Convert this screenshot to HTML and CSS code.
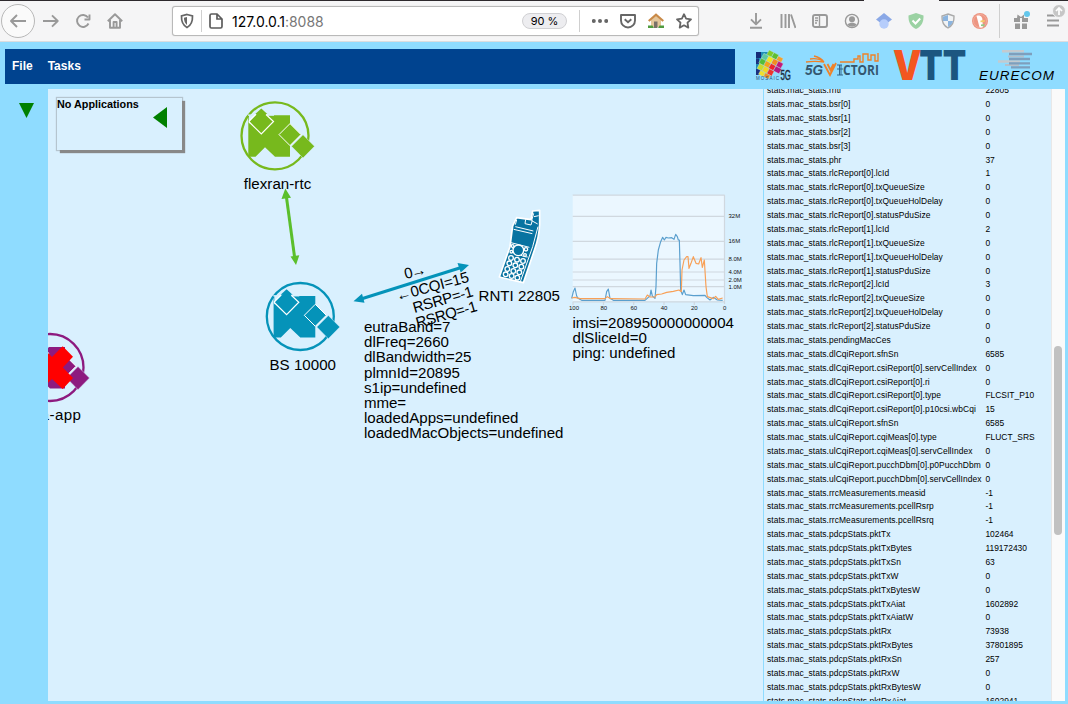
FILE: index.html
```html
<!DOCTYPE html>
<html lang="en">
<head>
<meta charset="utf-8">
<title>127.0.0.1:8088</title>
<link rel="stylesheet" href="styles.css">
</head>
<body>
<div class="tabstrip"><span class="tab-active"></span></div>
<header class="browser">
  <div class="back"><svg width="20" height="20" viewBox="0 0 20 20"><path d="M18 10H3M9 4L3 10l6 6" class="ln"/></svg></div>
  <div class="nav">
    <svg width="16" height="16" viewBox="0 0 16 16"><path d="M0 8h14.500M9 2.300L14.700 8 9 13.700" class="ln"/></svg>
    <svg width="16" height="16" viewBox="0 0 16 16"><path d="M13 4.500A6 6 0 1 0 13.500 10.500M14.500 1.500V6.500H9.500" class="ln"/></svg>
    <svg width="16" height="16" viewBox="0 0 16 16"><path d="M.8 8.200L8 1.200l7.200 7M3 7v7.700h10V7" class="ln"/><path d="M6.600 14V9h3v5" class="ln"/></svg>
  </div>
  <div class="urlbar">
    <svg class="shield" width="14" height="16" viewBox="0 0 14 16"><path d="M7 1.500L12.500 3c.2 5-.9 9-5.500 11.500C2.400 12 1.300 8 1.500 3z" fill="none" stroke="#666" stroke-width="1.700"/><path d="M7 4v8C4.800 10 4 8 4 4.700z" fill="#666"/></svg>
    <i class="sep"></i>
    <svg class="page" width="14" height="16" viewBox="0 0 14 16"><path d="M2.500 1H8l5 5v7.500a1.500 1.500 0 0 1-1.500 1.500h-9A1.500 1.500 0 0 1 1 13.500v-11A1.500 1.500 0 0 1 2.500 1zM8 1.500V6h4.500" fill="none" stroke="#5c5c5c" stroke-width="1.700"/></svg>
    <span class="url">127.0.0.1<span class="port">:8088</span></span>
    <span class="zoom">90 %</span>
    <i class="sep"></i>
    <div class="actions">
      <svg width="16" height="16" viewBox="0 0 16 16" fill="#666"><circle cx="1.800" cy="8" r="2"/><circle cx="8" cy="8" r="2"/><circle cx="14.200" cy="8" r="2"/></svg>
      <svg width="16" height="16" viewBox="0 0 16 16" fill="none" stroke="#666" stroke-width="1.900"><path d="M1 2h14V7.500A7 7 0 0 1 1 7.500z" stroke-linejoin="round"/><path d="M4.700 6.300L8 9.300l3.300-3"/></svg>
      <svg width="16" height="16" viewBox="0 0 16 16"><path d="M3 7l5-5 5 5v7H3z" fill="#e4c69b"/><path d="M.7 8L8 1.700 15.300 8" fill="none" stroke="#c98a48" stroke-width="2.200"/><path d="M6 8.500h3.500V15H6z" fill="#7a7069"/><path d="M0 12.500h4.500L6 15H0zM11.500 12.500H16V15h-6z" fill="#4f9b3f"/></svg>
      <svg width="16" height="16" viewBox="0 0 16 16"><path d="M8 1.200l2.100 4.400 4.900.7-3.500 3.400.8 4.900L8 12.300l-4.300 2.300.8-4.900L1 6.300l4.900-.7z" fill="none" stroke="#666" stroke-width="1.800" stroke-linejoin="round"/></svg>
    </div>
  </div>
  <div class="tools">
    <svg width="16" height="16" viewBox="0 0 16 16"><path d="M8 0v11M3 6.300l5 5 5-5M2 14.800h12" class="ln"/></svg>
    <svg width="16" height="16" viewBox="0 0 16 16"><path d="M1.500 1v14M5.500 1v14M9 1v14M11 1.500L15.500 15" class="ln"/></svg>
    <svg width="16" height="16" viewBox="0 0 16 16"><rect x="1" y="2" width="14" height="12" rx="2" class="ln"/><path d="M7.500 2v12M3 5h3M3 7.500h3M3 10h2" class="ln thin"/></svg>
    <svg width="16" height="16" viewBox="0 0 16 16"><circle cx="8" cy="8" r="6.600" class="ln thin"/><circle cx="8" cy="6.300" r="3" fill="#999"/><path d="M3.400 11.500C5.500 9 10.500 9 12.600 11.500c-2 3-7 3-9.200 0z" fill="#999"/></svg>
    <svg width="16" height="16" viewBox="0 0 16 16"><path d="M8 0l8 6.500-4 3H4l-4-3z" fill="#8aa8e6"/><circle cx="8" cy="11" r="4.700" fill="#b6cdfb"/></svg>
    <svg width="16" height="16" viewBox="0 0 16 16"><path d="M8 0l7.500 2.500C15.800 9 13.500 13.500 8 16 2.500 13.500.2 9 .5 2.500z" fill="#9bd2a3"/><path d="M4.500 7.500l3 3 4.700-5" fill="none" stroke="#fff" stroke-width="2"/></svg>
    <svg width="16" height="16" viewBox="0 0 16 16"><path d="M8 1l6 2c.3 5.700-1.300 9.500-6 12C3.300 12.500 1.700 8.700 2 3z" fill="#f1f3f5" stroke="#aaa" stroke-width="1.400"/><path d="M8 2v6H3L2.800 3.700zM8 8h5c-.8 3-2 4.500-5 6z" fill="#8bb4df"/></svg>
    <svg width="16" height="16" viewBox="0 0 16 16"><circle cx="8" cy="8" r="8" fill="#ed9582"/><circle cx="8" cy="8" r="6.500" fill="none" stroke="#f3b8aa" stroke-width=".6"/><path d="M4.500 3C8 1.500 11 4 10.300 7.500L11 14c-1.500.7-2.500.7-3.500.3z" fill="#fff"/><path d="M8.500 7.500l4.500-.6-.5 2-4 .4z" fill="#f3cb67"/><path d="M9 11.500l3.500-.5v2.500L9 13z" fill="#91c985"/></svg>
  </div>
  <i class="sep tall"></i>
  <div class="tools last">
    <svg width="20" height="20" viewBox="0 0 20 20"><path d="M3 8h6v4H3zM11 8h6v4h-6zM4 13.500h5V19H4zM11 13.500h5V19h-5zM6.500 4.500L10 7l3-2.500V8H6z" fill="#999"/><circle cx="16" cy="4" r="3" fill="#63c7ec"/></svg>
    <svg width="22" height="24" viewBox="0 0 22 24"><path d="M2 11.500h12M2 16.500h12M2 21.500h12" class="ln"/><circle cx="14" cy="7" r="6.500" fill="#c6c6c6" stroke="#f5f5f6"/><path d="M14 11V4.500M11 7l3-3 3 3" fill="none" stroke="#fff" stroke-width="1.700"/></svg>
  </div>
</header>

<div class="app">
  <div class="topbar">
    <nav class="menu"><span>File</span><span>Tasks</span></nav>
    <div class="logos">
      <svg width="37" height="32" viewBox="0 0 37 32">
        <path d="M1 3h14v23H1z" fill="#1f8fb5"/><path d="M1 3h5v6H1z" fill="#152b77"/><path d="M1 9.500h3V15H1zM1 20l6 1 3 5H1z" fill="#1a317f"/>
        <g transform="translate(11.500 -.5) rotate(28)" stroke="#b9e2e6" stroke-width=".4">
          <path d="M3 0h5.500v5.500H3z" fill="#7ecb29"/><path d="M8.500 0H14v5.500H8.500z" fill="#5fbe2f"/><path d="M14 1h5.500v4.500H14z" fill="#f4a02a"/>
          <path d="M0 5.500h5.500V11H0z" fill="#5cc8a0"/><path d="M5.500 5.500H11V11H5.500z" fill="#f3e61d"/><path d="M11 5.500h5.500V11H11z" fill="#f28c21"/><path d="M16.500 5.500H22V11h-5.500z" fill="#c2187c"/>
          <path d="M0 11h5.500v5.500H0z" fill="#54be38"/><path d="M5.500 11H11v5.500H5.500z" fill="#f3a11c"/><path d="M11 11h5.500v5.500H11z" fill="#ee242d"/><path d="M16.500 11H23v5.500h-6.500z" fill="#b31983"/>
          <path d="M1 16.500h5.500V22H1z" fill="#c9dc2a"/><path d="M6.500 16.500H12V22H6.500z" fill="#f5d51d"/><path d="M12 16.500h5.500V22H12z" fill="#ee342d"/>
          <path d="M5 22h5.500v4.500H5z" fill="#f0e02d"/><path d="M10.500 22H16v4h-5.500z" fill="#f28c21"/>
        </g>
        <text x="1" y="31" class="mosaic" textLength="23">MOSAIC</text>
        <text x="25.500" y="30.500" class="mosaic5g" textLength="10.500" lengthAdjust="spacingAndGlyphs">5G</text>
      </svg>
      <svg width="75" height="28" viewBox="0 0 75 28">
        <text x="0" y="23" class="v5g" textLength="18" lengthAdjust="spacingAndGlyphs">5G</text>
        <path d="M5 7c6-1 10 0 14 3-7-1-11-1-18 0M9 4c4 1 8 3 10 6" fill="none" stroke="#ef8228" stroke-width="1.300"/>
        <path d="M19 12l6 11 6-12M22.500 12l3 6 3-6" fill="none" stroke="#ef8228" stroke-width="1.800"/>
        <path d="M34.500 13v10M32 13h5M36 13v10M32 17h6M32 23h6" stroke="#34678c" fill="none"/>
        <text x="38" y="23" class="victori" textLength="36" lengthAdjust="spacingAndGlyphs">CTORI</text>
        <path d="M35 10h14V7h4V4h2v6h3V2h5v6h3V3h4v6h3V1" fill="none" stroke="#ef8228" stroke-width="1.400"/>
      </svg>
      <svg width="74" height="32" viewBox="0 0 74 32">
        <text x="0" y="30.500" class="vtt" textLength="28.500" lengthAdjust="spacingAndGlyphs" fill="#f3561f">V</text>
        <text x="26.300" y="30.500" class="vtt" textLength="47" lengthAdjust="spacingAndGlyphs" fill="#1c5680">TT</text>
      </svg>
      <svg width="78" height="32" viewBox="0 0 78 32">
        <path d="M24 2.300h22M20 12.500h22" stroke="#c4cacf" stroke-width="2.500"/><path d="M30 7.500h16M27 16h14" stroke="#b5c0cb" stroke-width="2"/>
        <path d="M31 5h23M31 10h21M31 14.300h21M33 18.300h19" stroke="#7e9fbd" stroke-width="2.300"/>
        <text x="1" y="30.500" class="eurecom" textLength="75">EURECOM</text>
      </svg>
    </div>
  </div>

  <div class="workspace">
    <aside class="rail"><i class="down"></i></aside>
    <main class="canvas">
      <svg class="graph" viewBox="48 89 715 612" width="715" height="612">
        <defs>
          <g id="node">
            <circle r="33.500" fill="none" stroke="currentColor" stroke-width="2.300"/>
            <path d="M-26.700-20.500H15V21H0l-10-9.500L-19.500 21h-7.200z" fill="currentColor"/>
            <path d="M-27-20.700h26" stroke="#d9f0fe" stroke-width="1.300"/>
            <path d="M-13.700-27.300l6 5.500h-12z" fill="currentColor"/>
            <path d="M-26-20.500h8L-26-12z" fill="#d9f0fe"/>
            <path d="M-13.700-26.300l12.300 12-12 12-12.300-12z" fill="currentColor"/>
            <path d="M-26.300-14.300l12.600 12.500 12.200-12.500-7.500-7M-26.300-14.300l7-7" fill="none" stroke="#fff" stroke-width="1.200"/>
            <path d="M15-12.200L26-1.200 15 9.800 4-1.200z" fill="currentColor" stroke="#fff"/>
            <path d="M28-1L39.500 10.500 28 22.200 16.500 10.500z" fill="currentColor" stroke="#d9f0fe" stroke-width=".5"/>
          </g>
        </defs>
        <use href="#node" x="275" y="135.800" color="#77b91d"/>
        <use href="#node" x="300.300" y="316.500" color="#0593b9"/>
        <use href="#node" x="50" y="367.500" color="#8d1a7f"/>
        <path d="M41.300 346.300L52 357l10.700-10.700L73 356.700l-10.200 10.800L73 378l-10.300 11L52 379l-10.700 10L31 378l10.500-10.500L31 356.700z" fill="#f00"/>

        <g stroke="#5bbf2c" fill="#5bbf2c"><path d="M286.300 196L294.700 258" stroke-width="3"/><path d="M285.300 188.500l5.700 9.200-9.500 1.300zM296 265l3.300-9.700-8.800 1.200z" stroke="none"/></g>
        <g stroke="#0593b9" fill="#0593b9"><path d="M361 299L462 267.300" stroke-width="3"/><path d="M353.500 301.300l8.500-7.500 2.500 9zM469 265l-11.500-2 3.200 9.500z" stroke="none"/></g>

        <g class="label">
          <text x="243.700" y="189" textLength="67.500">flexran-rtc</text>
          <text x="269.500" y="370" textLength="66.500">BS 10000</text>
          <text x="14" y="420" textLength="67">ueda-app</text>
          <text x="478.500" y="301" textLength="81.500">RNTI 22805</text>
          <g transform="translate(405.500 279) rotate(-13)"><text textLength="22">0→</text></g>
          <g transform="translate(397.500 301) rotate(-15)"><text textLength="75">←0CQI=15</text></g>
          <g transform="translate(414.500 313) rotate(-16)"><text textLength="62">RSRP=-1</text></g>
          <g transform="translate(417.500 328) rotate(-16)"><text textLength="63">RSRQ=-1</text></g>
          <text x="364" y="332" textLength="86.500">eutraBand=7</text>
          <text x="364" y="347" textLength="85">dlFreq=2660</text>
          <text x="364" y="362" textLength="107.500">dlBandwidth=25</text>
          <text x="364" y="378" textLength="96">plmnId=20895</text>
          <text x="364" y="393" textLength="102.500">s1ip=undefined</text>
          <text x="364" y="408" textLength="42">mme=</text>
          <text x="364" y="423" textLength="154.500">loadedApps=undefined</text>
          <text x="364" y="438" textLength="199.500">loadedMacObjects=undefined</text>
          <text x="572.500" y="328" textLength="161.500">imsi=208950000000004</text>
          <text x="572.500" y="343" textLength="74.500">dlSliceId=0</text>
          <text x="572.500" y="358" textLength="103">ping: undefined</text>
        </g>

        <g transform="translate(480 190) scale(.33333)">
          <path d="M110 83l43 6 5-26 21-2v42c-1 25-6 50-15 75l-34 100-72-17 32-91 8-62z" fill="#0873a1" stroke="#fff" stroke-width="5" stroke-linejoin="round"/>
          <path d="M106 110l54 13M101 118l56 13M93 158l55 14M93 163c5 20 30 38 50 38" fill="none" stroke="#fff" stroke-width="3"/>
          <path d="M137 88l-2 13 18 4 4-14M161 70l-6 22 18 10M174 110l-16 60-37 105M162 80l14-3M110 90l-4 14" fill="none" stroke="#fff" stroke-width="3"/>
          <circle cx="115" cy="181" r="16" fill="#0873a1" stroke="#fff" stroke-width="4"/>
          <g fill="#0873a1" stroke="#fff" stroke-width="4">
            <circle cx="98" cy="168" r="4"/><circle cx="138" cy="178" r="5"/><circle cx="94" cy="185" r="4"/><circle cx="135" cy="195" r="4"/>
            <circle cx="93" cy="204" r="7"/><circle cx="111" cy="209" r="7"/><circle cx="129" cy="213" r="7"/>
            <circle cx="88" cy="220" r="7"/><circle cx="106" cy="226" r="7"/><circle cx="124" cy="230" r="7"/>
            <circle cx="82" cy="237" r="7"/><circle cx="100" cy="243" r="7"/><circle cx="118" cy="247" r="7"/>
            <circle cx="77" cy="253" r="7"/><circle cx="95" cy="258" r="7"/><circle cx="112" cy="263" r="7"/>
          </g>
        </g>

        <rect x="572.700" y="195" width="152" height="106.500" fill="#ebf7ff"/>
        <path d="M572.700 195.200h152M572.700 216.300h152M572.700 241.300h152M572.700 259.200h152M572.700 272h152M572.700 280h152M572.700 286.700h152M572.700 301.800h152M724.500 195v109M573 302v3M603.500 302v3M633.700 302v3M664 302v3M694.300 302v3" stroke="#d0d8df" stroke-width="1.200" fill="none"/>
        <g transform="translate(480 190) scale(.33333)" fill="none" stroke-width="3.500" stroke-linejoin="round">
          <polyline stroke="#5a9fce" points="275,325 280,305 285,294 290,318 294,325 305,331 375,331 380,305 385,297 390,325 400,331 495,331 505,322 510,318 513,300 517,318 525,325 528,290 530,220 535,180 542,155 548,142 553,150 558,142 565,144 575,143 582,148 587,133 592,140 595,150 598,150 600,220 602,300 607,314 612,300 617,314 640,317 675,316 680,322 690,330 700,322 712,330 728,331"/>
          <polyline stroke="#f8a057" points="275,324 285,322 300,326 375,326 382,320 392,326 495,327 502,315 510,321 525,321 530,314 545,312 560,307 580,304 597,300 604,305 606,240 612,210 620,200 624,200 627,235 633,220 640,200 648,220 656,222 663,203 667,232 673,210 678,290 682,320 700,326 707,319 715,328 728,324"/>
        </g>
        <g class="axis">
          <text x="728.500" y="217.800">32M</text><text x="728.500" y="243">16M</text><text x="728.500" y="261">8.0M</text><text x="728.500" y="274">4.0M</text><text x="728.500" y="282.300">2.0M</text><text x="728.500" y="289.300">1.0M</text>
          <text x="569" y="310">100</text><text x="600.500" y="310">80</text><text x="630.500" y="310">60</text><text x="660.700" y="310">40</text><text x="691" y="310">20</text><text x="723" y="310">0</text>
        </g>
      </svg>
      <section class="apps"><span>No Applications</span><i class="left"></i></section>
    </main>
    <section class="stats">
      <div class="rows">
        <span>stats.mac_stats.rnti</span><span>22805</span>
        <span>stats.mac_stats.bsr[0]</span><span>0</span>
        <span>stats.mac_stats.bsr[1]</span><span>0</span>
        <span>stats.mac_stats.bsr[2]</span><span>0</span>
        <span>stats.mac_stats.bsr[3]</span><span>0</span>
        <span>stats.mac_stats.phr</span><span>37</span>
        <span>stats.mac_stats.rlcReport[0].lcId</span><span>1</span>
        <span>stats.mac_stats.rlcReport[0].txQueueSize</span><span>0</span>
        <span>stats.mac_stats.rlcReport[0].txQueueHolDelay</span><span>0</span>
        <span>stats.mac_stats.rlcReport[0].statusPduSize</span><span>0</span>
        <span>stats.mac_stats.rlcReport[1].lcId</span><span>2</span>
        <span>stats.mac_stats.rlcReport[1].txQueueSize</span><span>0</span>
        <span>stats.mac_stats.rlcReport[1].txQueueHolDelay</span><span>0</span>
        <span>stats.mac_stats.rlcReport[1].statusPduSize</span><span>0</span>
        <span>stats.mac_stats.rlcReport[2].lcId</span><span>3</span>
        <span>stats.mac_stats.rlcReport[2].txQueueSize</span><span>0</span>
        <span>stats.mac_stats.rlcReport[2].txQueueHolDelay</span><span>0</span>
        <span>stats.mac_stats.rlcReport[2].statusPduSize</span><span>0</span>
        <span>stats.mac_stats.pendingMacCes</span><span>0</span>
        <span>stats.mac_stats.dlCqiReport.sfnSn</span><span>6585</span>
        <span>stats.mac_stats.dlCqiReport.csiReport[0].servCellIndex</span><span>0</span>
        <span>stats.mac_stats.dlCqiReport.csiReport[0].ri</span><span>0</span>
        <span>stats.mac_stats.dlCqiReport.csiReport[0].type</span><span>FLCSIT_P10</span>
        <span>stats.mac_stats.dlCqiReport.csiReport[0].p10csi.wbCqi</span><span>15</span>
        <span>stats.mac_stats.ulCqiReport.sfnSn</span><span>6585</span>
        <span>stats.mac_stats.ulCqiReport.cqiMeas[0].type</span><span>FLUCT_SRS</span>
        <span>stats.mac_stats.ulCqiReport.cqiMeas[0].servCellIndex</span><span>0</span>
        <span>stats.mac_stats.ulCqiReport.pucchDbm[0].p0PucchDbm</span><span>0</span>
        <span>stats.mac_stats.ulCqiReport.pucchDbm[0].servCellIndex</span><span>0</span>
        <span>stats.mac_stats.rrcMeasurements.measid</span><span>-1</span>
        <span>stats.mac_stats.rrcMeasurements.pcellRsrp</span><span>-1</span>
        <span>stats.mac_stats.rrcMeasurements.pcellRsrq</span><span>-1</span>
        <span>stats.mac_stats.pdcpStats.pktTx</span><span>102464</span>
        <span>stats.mac_stats.pdcpStats.pktTxBytes</span><span>119172430</span>
        <span>stats.mac_stats.pdcpStats.pktTxSn</span><span>63</span>
        <span>stats.mac_stats.pdcpStats.pktTxW</span><span>0</span>
        <span>stats.mac_stats.pdcpStats.pktTxBytesW</span><span>0</span>
        <span>stats.mac_stats.pdcpStats.pktTxAiat</span><span>1602892</span>
        <span>stats.mac_stats.pdcpStats.pktTxAiatW</span><span>0</span>
        <span>stats.mac_stats.pdcpStats.pktRx</span><span>73938</span>
        <span>stats.mac_stats.pdcpStats.pktRxBytes</span><span>37801895</span>
        <span>stats.mac_stats.pdcpStats.pktRxSn</span><span>257</span>
        <span>stats.mac_stats.pdcpStats.pktRxW</span><span>0</span>
        <span>stats.mac_stats.pdcpStats.pktRxBytesW</span><span>0</span>
        <span>stats.mac_stats.pdcpStats.pktRxAiat</span><span>1602941</span>
      </div>
      <div class="track"><i class="thumb"></i></div>
    </section>
  </div>
</div>
</body>
</html>
```
FILE: styles.css
```css
* { box-sizing: border-box; }
body { margin: 0; width: 1068px; height: 704px; overflow: hidden; background: #8fdcff; font-family: "Liberation Sans", Arial, sans-serif; color: #000; display: flex; flex-direction: column; }
svg { display: block; flex: none; }
.tabstrip { height: 1px; flex: none; background: #2d292d; display: flex; }
.tab-active { margin-left: 864px; width: 75px; background: #f5f5f6; }
.browser { height: 41px; flex: none; background: #f5f5f6; border-bottom: 1px solid #dcdcde; display: flex; align-items: center; }
.ln { fill: none; stroke: #999; stroke-width: 1.9; stroke-linejoin: round; }
.thin { stroke-width: 1.4; }
.back { margin-left: 1px; width: 34px; height: 34px; border: 1px solid #b8b8b8; border-radius: 50%; background: #fafafa; display: flex; align-items: center; justify-content: center; }
.nav { margin-left: 8px; display: flex; gap: 16px; }
.urlbar { margin-left: 49px; width: 527px; height: 30px; border: 1px solid #b9b9b9; border-radius: 3px; background: #fff; display: flex; align-items: center; box-shadow: 0 0 1px #bbb; }
.shield { margin-left: 7px; }
.sep { flex: none; width: 1px; height: 22px; background: #cfcfcf; margin-left: 7px; }
.page { margin-left: 7px; }
.url { margin-left: 9px; width: 282px; font: 14px Inter, sans-serif; letter-spacing: -.03px; }
.port { color: #777; }
.zoom { width: 45px; height: 16px; margin-left: 8px; border: 1px solid #d0d0d3; border-radius: 8px; background: #ededf0; font: 11px/14px Inter, sans-serif; text-align: center; }
.zoom + .sep { margin-left: 12px; }
.actions { margin-left: 12px; display: flex; gap: 12px; }
.tools { margin-left: 49px; display: flex; gap: 16px; align-items: center; }
.tall { height: 34px; margin-left: 11px; }
.last { margin-left: 11px; gap: 14px; align-items: flex-start; margin-top: -8px; }
.last svg:first-child { margin-top: 6px; }
.last svg:last-child { margin-right: -2px; }

.app { flex: 1; display: flex; flex-direction: column; padding: 7px 3px 3px 0; min-height: 0; }
.topbar { height: 40px; flex: none; display: flex; align-items: flex-start; padding-left: 5px; }
.menu { width: 730px; height: 35px; background: #00438f; display: flex; align-items: center; gap: 15px; padding: 0 0 2px 7px; color: #fff; font-weight: bold; font-size: 12px; }
.logos { display: flex; margin-left: 20px; }
.logos svg { overflow: visible; }
.logos svg:nth-child(2) { margin: 3px 0 0 13px; }
.logos svg:nth-child(3) { margin-left: 13px; }
.logos svg:nth-child(4) { margin-left: 11px; }
.mosaic { font-size: 4.5px; fill: #265078; }
.mosaic5g { font-size: 14px; fill: #1b2c3c; stroke: #1b2c3c; stroke-width: .4px; }
.v5g { font-size: 15px; font-weight: bold; font-style: italic; fill: #34576f; }
.victori { font: bold 14px "Open Sans", sans-serif; fill: #34576f; }
.vtt { font: 900 41px Inter, sans-serif; }
.eurecom { font-size: 13.5px; font-style: italic; }

.workspace { flex: 1; display: flex; min-height: 0; }
.rail { width: 48px; flex: none; padding: 14px 0 0 19px; }
.down { display: block; width: 15px; height: 15px; background: #008000; clip-path: polygon(0 0, 100% 0, 50% 100%); }
.canvas { position: relative; width: 715px; flex: none; background: #d9f0fe; overflow: hidden; }
.label { font-size: 15.1px; }
.axis { font-size: 6px; fill: #111; }
.apps { position: absolute; left: 9px; top: 9px; width: 125px; height: 52px; background: #d9f0fe; box-shadow: 3px 3px 1px #888, 0 0 1px 1px #b5c5cf; display: flex; justify-content: space-between; font-weight: bold; font-size: 10.8px; line-height: 12px; }
.apps span { white-space: nowrap; }
.left { width: 14px; height: 21px; margin: 9px 15px 0 0; background: #008000; clip-path: polygon(100% 0, 100% 100%, 0 50%); }
.stats { flex: 1; display: flex; justify-content: space-between; background: #d9f0fe; border-left: 1px solid #8fdcff; overflow: hidden; }
.rows { width: 287px; margin-top: -4.8px; padding-left: 3px; display: grid; grid-template-columns: 218.4px 1fr; grid-auto-rows: 13.88px; font-size: 8.45px; line-height: 13.88px; white-space: nowrap; }
.rows span:nth-child(odd) { letter-spacing: .065px; }
.track { width: 14px; background: #fafafa; border-left: 1px solid #e8e8e8; padding: 257px 3px 0 2px; }
.thumb { display: block; width: 8px; height: 189px; border-radius: 4px; background: #c1c1c1; }
```
